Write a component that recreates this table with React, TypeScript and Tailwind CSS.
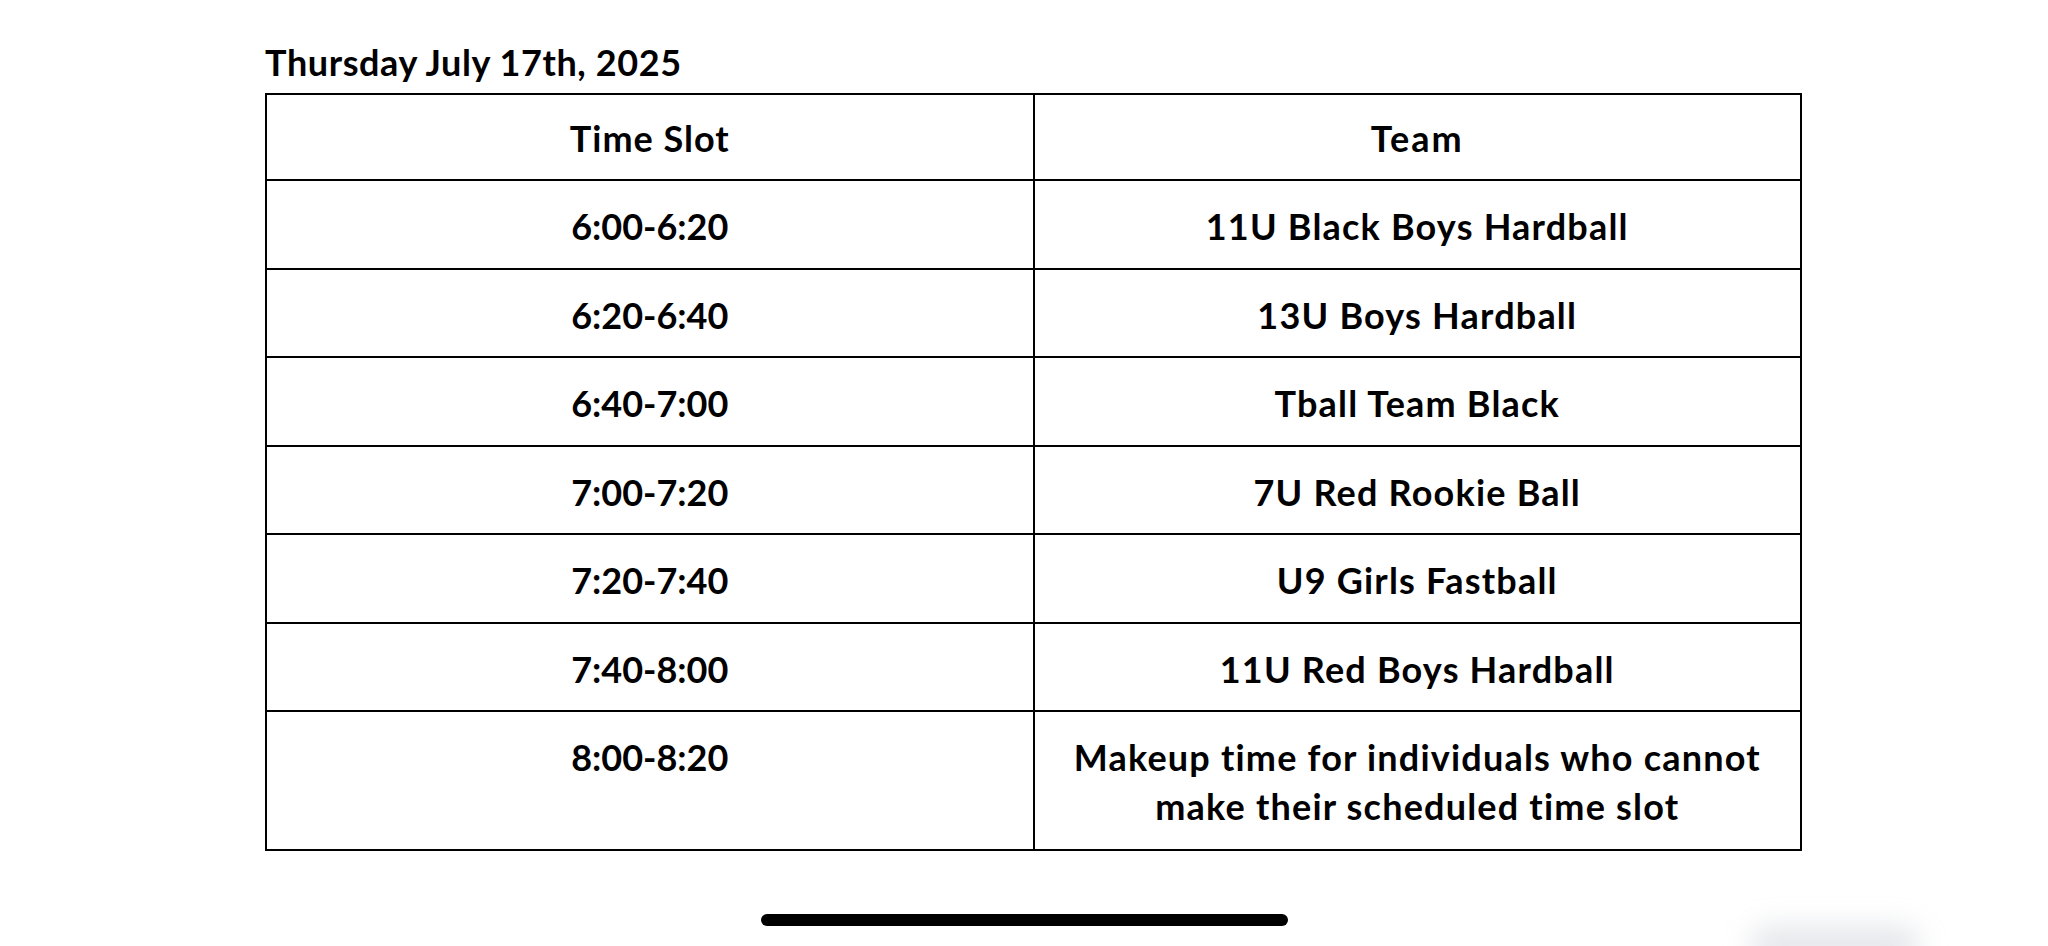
const rows: [string, string[]][] = [
  ["6:00-6:20", ["11U Black Boys Hardball"]],
  ["6:20-6:40", ["13U Boys Hardball"]],
  ["6:40-7:00", ["Tball Team Black"]],
  ["7:00-7:20", ["7U Red Rookie Ball"]],
  ["7:20-7:40", ["U9 Girls Fastball"]],
  ["7:40-8:00", ["11U Red Boys Hardball"]],
  ["8:00-8:20", ["Makeup time for individuals who cannot", "make their scheduled time slot"]],
];

export default function App() {
  return (
    <div className="relative h-[946px] w-full overflow-hidden bg-white text-black font-['Lato','Liberation_Sans',sans-serif] font-bold">
      <div className="pl-[265px] pt-[42px]">
        <div className="text-[36px] leading-[40px] tracking-[0.6px] mb-[11px]">Thursday July 17th, 2025</div>

        <table className="w-[1537px] table-fixed border-collapse text-center text-[36px] leading-[49px]">
          <thead>
            <tr>
              <th className="border-2 border-black align-top pt-[19px] pb-[16px] font-bold tracking-[1px]">Time Slot</th>
              <th className="border-2 border-black align-top pt-[19px] pb-[16px] font-bold tracking-[2px]">Team</th>
            </tr>
          </thead>
          <tbody>
            {rows.map(([time, team]) => {
              const last = team.length > 1;
              const pad = last ? "pt-[21px] pb-[18px]" : "pt-[21px] pb-[16.5px]";
              return (
                <tr key={time}>
                  <td className={`border-2 border-black align-top ${pad}`}>{time}</td>
                  <td className={`border-2 border-black align-top tracking-[1.2px] ${pad}`}>
                    {team.map((line) => (
                      <div key={line}>{line}</div>
                    ))}
                  </td>
                </tr>
              );
            })}
          </tbody>
        </table>
      </div>

      {/* home indicator */}
      <div className="absolute left-0 right-0 top-[914px] flex justify-center">
        <div className="h-[12px] w-[527px] rounded-full bg-black" />
      </div>

      {/* faint shadow bottom right */}
      <div className="absolute left-[1750px] top-[926px] h-[40px] w-[170px] rounded-full bg-gray-400/25 blur-[14px]" />
    </div>
  );
}
